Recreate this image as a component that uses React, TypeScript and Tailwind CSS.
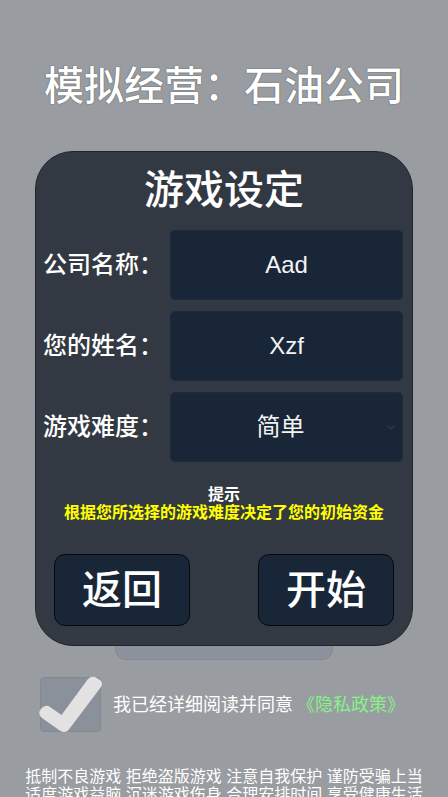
import { useState, type ReactNode } from "react";

const fieldClass =
  "h-[70px] w-full min-w-0 rounded-[5px] border border-[#1d2a3b] bg-[#182638] text-center text-2xl text-[#f3f3f3] outline-none";

function Field({ id, label, children }: { id: string; label: string; children: ReactNode }) {
  return (
    <div className="flex items-center">
      <label htmlFor={id} className="w-[127px] shrink-0 text-2xl font-medium">
        {label}
      </label>
      <div className="grid min-w-0 flex-1 items-center">{children}</div>
    </div>
  );
}

function ActionButton({ children }: { children: ReactNode }) {
  return (
    <button
      type="button"
      className="h-[72px] w-[136px] rounded-[11px] border border-[#05090f] bg-[#182638] text-[40px] leading-none font-medium"
    >
      {children}
    </button>
  );
}

export default function App() {
  const [company, setCompany] = useState("Aad");
  const [owner, setOwner] = useState("Xzf");
  const [level, setLevel] = useState("简单");
  const [agreed, setAgreed] = useState(true);

  return (
    <main className="flex h-screen flex-col overflow-hidden bg-[#999ca0] font-['Liberation_Sans','Noto_Sans_CJK_SC',sans-serif] text-white">
      <h1 className="pt-[60px] text-center text-[40px] leading-[52px] font-medium whitespace-nowrap [text-shadow:0_0_1px_#44464a,0_0_1px_#66686c]">
        模拟经营：石油公司
      </h1>

      <form
        onSubmit={(e) => e.preventDefault()}
        className="z-10 mx-[35px] mt-[39px] flex shrink-0 flex-col rounded-[38px] border border-[#20252d] bg-[#333942] pb-[19px]"
      >
        <h2 className="pt-3 text-center text-[40px] leading-[52px] font-medium">游戏设定</h2>

        <div className="mt-[14px] flex flex-col gap-[11px] pr-[9px] pl-[7px]">
          <Field id="company" label="公司名称：">
            <input id="company" className={fieldClass} value={company} onChange={(e) => setCompany(e.target.value)} />
          </Field>
          <Field id="owner" label="您的姓名：">
            <input id="owner" className={fieldClass} value={owner} onChange={(e) => setOwner(e.target.value)} />
          </Field>
          <Field id="level" label="游戏难度：">
            <select
              id="level"
              className={`${fieldClass} col-start-1 row-start-1 appearance-none pr-3 [text-align-last:center]`}
              value={level}
              onChange={(e) => setLevel(e.target.value)}
            >
              <option>简单</option>
              <option>普通</option>
              <option>困难</option>
            </select>
            <svg
              viewBox="0 0 8 5"
              className="pointer-events-none col-start-1 row-start-1 mr-2 h-[5px] w-2 justify-self-end"
              fill="none"
              stroke="#363c44"
              strokeWidth="1.2"
              aria-hidden="true"
            >
              <path d="M0.5 0.5 4 4 7.5 0.5" />
            </svg>
          </Field>
        </div>

        <div className="mt-6 text-center text-base leading-[18px] font-bold">
          <p>提示</p>
          <p className="text-[#ffff00]">根据您所选择的游戏难度决定了您的初始资金</p>
        </div>

        <div className="mt-8 flex justify-between px-[18px]">
          <ActionButton>返回</ActionButton>
          <ActionButton>开始</ActionButton>
        </div>
      </form>

      <div className="-mt-6 h-[38px] w-[218px] shrink-0 self-center rounded-[11px] border border-[#85888e] bg-[#8b929d]" />

      <div className="mt-4 flex shrink-0 items-center pl-[39px] text-lg">
        <div className="grid">
          <input
            id="agree"
            type="checkbox"
            checked={agreed}
            onChange={(e) => setAgreed(e.target.checked)}
            className="peer col-start-1 row-start-1 ml-px h-[55px] w-[61px] appearance-none self-end rounded-[4px] border border-[#838990] bg-[#8a919b]"
          />
          <svg
            viewBox="0 0 64 56"
            className="pointer-events-none invisible col-start-1 row-start-1 h-14 w-16 peer-checked:visible"
            aria-hidden="true"
          >
            <path
              d="M0.500 35.500Q1 33 4 31Q8 28.500 11 31L22.500 39 49 3Q52 0 56 1L61 4Q64.500 7 62 11L29.500 54Q28 56 25 56Q22.500 56 20 54L3 42Q-0.500 39 0.500 35.500Z"
              fill="#e4e1e2"
            />
          </svg>
        </div>
        <div className="ml-[10px] flex gap-1 pt-[2px] whitespace-nowrap">
          <label htmlFor="agree">我已经详细阅读并同意</label>
          <a href="#privacy" className="text-[#86f388]">
            《隐私政策》
          </a>
        </div>
      </div>

      <footer className="mt-9 shrink-0 text-center text-base leading-[18px] whitespace-nowrap">
        <p>抵制不良游戏 拒绝盗版游戏 注意自我保护 谨防受骗上当</p>
        <p>适度游戏益脑 沉迷游戏伤身 合理安排时间 享受健康生活</p>
      </footer>
    </main>
  );
}
